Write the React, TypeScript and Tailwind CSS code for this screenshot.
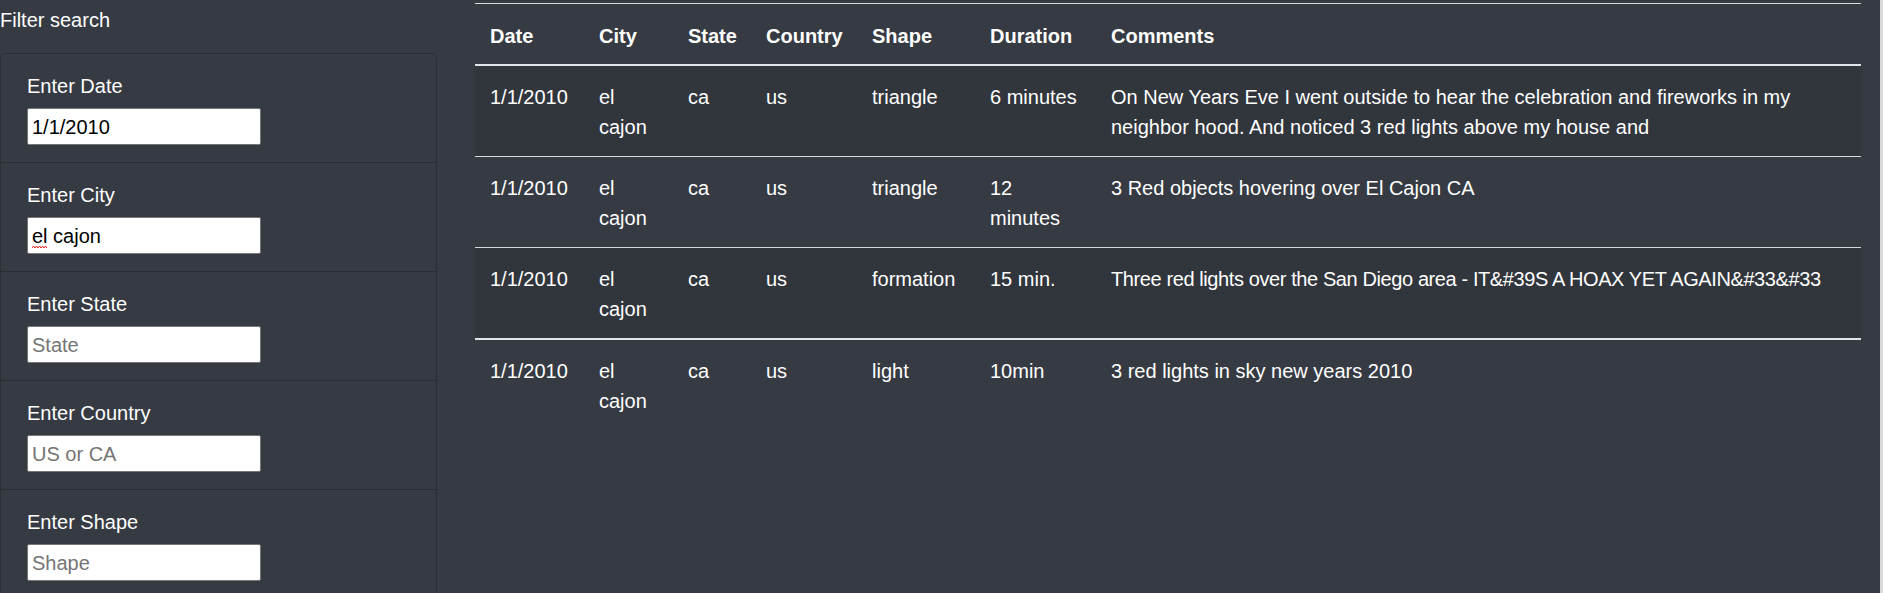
import React from 'react';

interface Sighting {
  datetime: string;
  city: string;
  state: string;
  country: string;
  shape: string;
  duration: string;
  comments: string;
  tight?: boolean;
}

const sightings: Sighting[] = [
  {
    datetime: '1/1/2010',
    city: 'el cajon',
    state: 'ca',
    country: 'us',
    shape: 'triangle',
    duration: '6 minutes',
    comments:
      'On New Years Eve I went outside to hear the celebration and fireworks in my neighbor hood. And noticed 3 red lights above my house and',
  },
  {
    datetime: '1/1/2010',
    city: 'el cajon',
    state: 'ca',
    country: 'us',
    shape: 'triangle',
    duration: '12 minutes',
    comments: '3 Red objects hovering over El Cajon CA',
  },
  {
    datetime: '1/1/2010',
    city: 'el cajon',
    state: 'ca',
    country: 'us',
    shape: 'formation',
    duration: '15 min.',
    comments: 'Three red lights over the San Diego area - IT&#39S A HOAX YET AGAIN&#33&#33',
    tight: true,
  },
  {
    datetime: '1/1/2010',
    city: 'el cajon',
    state: 'ca',
    country: 'us',
    shape: 'light',
    duration: '10min',
    comments: '3 red lights in sky new years 2010',
  },
];

const filters = [
  { label: 'Enter Date', value: '1/1/2010', placeholder: '1/1/2011' },
  { label: 'Enter City', value: 'el cajon', placeholder: 'City', squiggle: true },
  { label: 'Enter State', value: '', placeholder: 'State' },
  { label: 'Enter Country', value: '', placeholder: 'US or CA' },
  { label: 'Enter Shape', value: '', placeholder: 'Shape' },
];

const headers = ['Date', 'City', 'State', 'Country', 'Shape', 'Duration', 'Comments'];

const App: React.FC = () => {
  return (
    <div className="h-screen w-full overflow-hidden bg-[#363a42] text-white font-['Liberation_Sans',Arial,sans-serif] text-[20px] leading-[30px] flex border-r-[3px] border-[#d9d9d9]">
      {/* Sidebar filters */}
      <aside className="w-[437px] shrink-0">
        <div className="pt-[5px] h-[34px]">Filter search</div>
        <ul className="mt-[19px] rounded-t-[5px] border border-b-0 border-[#2b2f35]">
          {filters.map((f, i) => (
            <li
              key={f.label}
              className={`pl-[26px] pt-[15px] pb-[17px] ${i > 0 ? 'border-t border-[#2b2f35]' : ''}`}
            >
              <label className="block pt-[2px] mb-[7px]">{f.label}</label>
              <div className="relative w-[234px]">
                <input
                  type="text"
                  defaultValue={f.value}
                  placeholder={f.placeholder}
                  spellCheck={false}
                  className="block w-[234px] h-[37px] px-[4px] pt-[1px] bg-white text-black text-[20px] border border-[#767676] rounded-[2px] outline-none placeholder:text-[#757575]"
                />
                {f.squiggle && (
                  <svg
                    className="absolute left-[5px] top-[28px] pointer-events-none"
                    width="15"
                    height="4"
                    viewBox="0 0 15 4"
                  >
                    <path
                      d="M0 3 L1.5 1 L3 3 L4.5 1 L6 3 L7.5 1 L9 3 L10.5 1 L12 3 L13.5 1 L15 3"
                      fill="none"
                      stroke="#e0221b"
                      strokeWidth="1"
                    />
                  </svg>
                )}
              </div>
            </li>
          ))}
        </ul>
      </aside>

      {/* Results table */}
      <main className="ml-[38px] w-[1386px] shrink-0 pt-[3px]">
        <table className="w-[1386px] table-fixed border-collapse">
          <colgroup>
            <col className="w-[109px]" />
            <col className="w-[89px]" />
            <col className="w-[78px]" />
            <col className="w-[106px]" />
            <col className="w-[118px]" />
            <col className="w-[121px]" />
            <col />
          </colgroup>
          <thead>
            <tr>
              {headers.map((h) => (
                <th
                  key={h}
                  className="px-[15px] pt-[17px] pb-[13px] text-left font-bold whitespace-nowrap align-bottom border-t border-b-2 border-t-[#d6d9dc] border-b-[#e2e4e7]"
                >
                  {h}
                </th>
              ))}
            </tr>
          </thead>
          <tbody>
            {sightings.map((s, i) => {
              const stripe = i % 2 === 0 ? 'bg-[#31353c]' : '';
              const border =
                i === 0 ? '' : i === 3 ? 'border-t-2 border-[#e2e4e7]' : 'border-t border-[#d6d9dc]';
              const cell = `px-[15px] pt-[16px] pb-[14px] align-top ${border}`;
              return (
                <tr key={i} className={stripe}>
                  <td className={`${cell} whitespace-nowrap`}>{s.datetime}</td>
                  <td className={cell}>{s.city}</td>
                  <td className={cell}>{s.state}</td>
                  <td className={cell}>{s.country}</td>
                  <td className={cell}>{s.shape}</td>
                  <td className={cell}>{s.duration}</td>
                  <td className={`${cell} ${s.tight ? 'whitespace-nowrap tracking-[-0.4px]' : ''}`}>
                    {s.comments}
                  </td>
                </tr>
              );
            })}
          </tbody>
        </table>
      </main>
    </div>
  );
};

export default App;
